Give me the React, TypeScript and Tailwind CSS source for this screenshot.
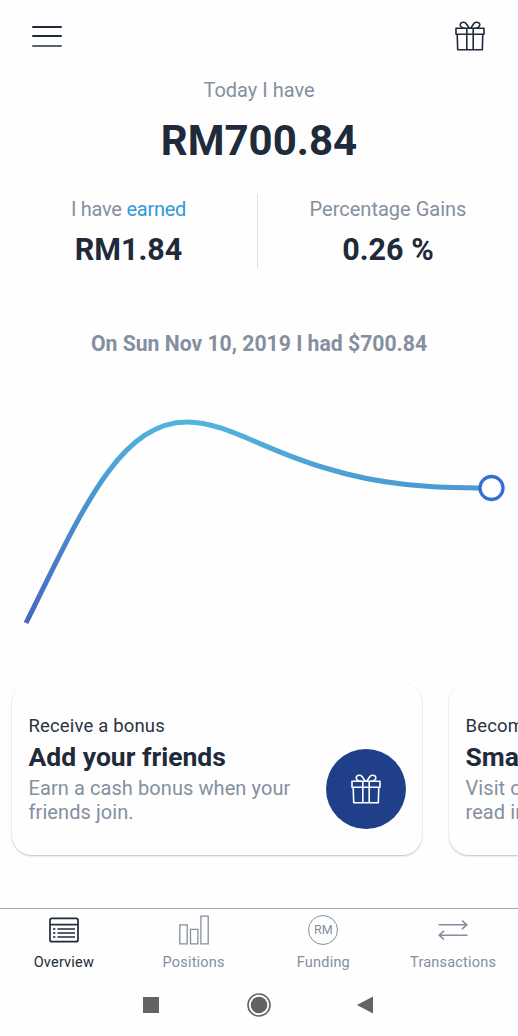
import type { ReactNode } from "react";

function GiftIcon({ className }: { className: string }) {
  return (
    <svg viewBox="0 0 30 30" className={className} fill="none" stroke="currentColor" strokeWidth="1.6" strokeLinejoin="round">
      <path d="M1 7.2h28v6H1z" />
      <path d="M2.2 13.2l.5 15.6h24.6l.5-15.6" />
      <path d="M11.8 7.2v21.6M18.2 7.2v21.6" />
      <path d="M10.600 7.200H8.200C5 5.600 4.400 3.300 6 2c2-1.500 4.300-.8 5.600 1.200l2.600 4" />
      <path d="M19.400 7.200h2.400C25 5.600 25.600 3.300 24 2c-2-1.500-4.300-.8-5.600 1.200l-2.600 4" />
    </svg>
  );
}

function OverviewIcon() {
  return (
    <svg viewBox="0 0 30 30" className="size-[30px]" fill="none" stroke="currentColor" strokeWidth="1.7">
      <rect x="1" y="3.300" width="28" height="23.400" rx="2" />
      <path d="M1 9.600h28" />
      <path d="M8.500 14h17.500M8.500 18h17.500M8.500 22h17.500" />
      <path d="M4 14h2.400M4 18h2.400M4 22h2.400" />
    </svg>
  );
}

function PositionsIcon() {
  return (
    <svg viewBox="0 0 30 30" className="size-[30px]" fill="none" stroke="currentColor" strokeWidth="1.300">
      <path d="M.8 9.800h7.400v19H.8zM11.500 14.300h7.400v14.500h-7.400zM21.900 1.200h7.300v27.600h-7.300z" />
    </svg>
  );
}

function FundingIcon() {
  return (
    <span className="flex size-[30px] items-center justify-center rounded-full border border-[#8190a0] text-[12.500px] leading-none">
      RM
    </span>
  );
}

function TransactionsIcon() {
  return (
    <svg viewBox="0 0 30 30" className="size-[30px]" fill="none" stroke="currentColor" strokeWidth="1.600">
      <path d="M.5 9.800h28M24 5.500l4.800 4.300-4.800 4.300" />
      <path d="M29.500 20.200h-28M6 15.900l-4.800 4.300L6 24.500" />
    </svg>
  );
}

function Stat({ label, value }: { label: ReactNode; value: string }) {
  return (
    <div className="flex flex-col items-center">
      <p className="mt-[3px] text-[20px] leading-6 text-[#8490a0]">{label}</p>
      <p className="mt-[9px] text-[30.500px] leading-10 font-bold text-[#1f2a3a]">{value}</p>
    </div>
  );
}

function BalanceChart() {
  return (
    <svg viewBox="0 0 518 280" className="h-[280px] w-full shrink-0" fill="none">
      <defs>
        <linearGradient id="balance" gradientUnits="userSpaceOnUse" x1="0" y1="244" x2="0" y2="40">
          <stop offset="0" stopColor="#4568c4" />
          <stop offset="0.35" stopColor="#4a80c9" />
          <stop offset="0.7" stopColor="#4b9dd3" />
          <stop offset="1" stopColor="#52b5dc" />
        </linearGradient>
      </defs>
      <path
        d="M26 243C79 137 118 42 187 42C226 42 265 71 327 88.500C380 105 430 108 490 108"
        stroke="url(#balance)"
        strokeWidth="5"
      />
      <circle cx="491.500" cy="108" r="11.500" fill="#fff" stroke="#3270d6" strokeWidth="3.300" />
    </svg>
  );
}

function PromoCard({ eyebrow, title, text, icon }: { eyebrow: string; title: string; text: ReactNode; icon?: ReactNode }) {
  return (
    <article className="flex h-[172px] w-[410px] shrink-0 rounded-[20px] bg-[#fefefe] pr-[16.500px] pl-[16.500px] shadow-[0_1px_2px_rgba(0,0,0,0.25)]">
      <div className="flex-1 pt-[31px] whitespace-nowrap">
        <p className="text-[18.500px] leading-6 tracking-[0.16px] text-[#2b333e]">{eyebrow}</p>
        <h2 className="mt-[2px] text-[26.500px] leading-[34px] font-bold text-[#1f2a3a]">{title}</h2>
        <p className="mt-[2px] text-[20px] leading-6 tracking-[0.08px] text-[#8490a0]">{text}</p>
      </div>
      {icon && (
        <div className="mt-[66px] flex size-[80px] items-center justify-center rounded-full bg-[#1f4088] text-white">{icon}</div>
      )}
    </article>
  );
}

function Tab({ icon, label, active = false }: { icon: ReactNode; label: string; active?: boolean }) {
  return (
    <div className={`flex flex-1 flex-col items-center ${active ? "text-[#1f2a3a]" : "text-[#8190a0]"}`}>
      {icon}
      <span className="mt-[8px] text-[14.500px] leading-5 tracking-[0.2px]">{label}</span>
    </div>
  );
}

export default function App() {
  return (
    <main className="flex h-[1036px] w-[518px] flex-col overflow-hidden bg-[#fefefe] font-[Roboto,sans-serif]">
      <header className="flex h-[72px] shrink-0 items-center justify-between pr-[33px] pl-8">
        <div className="flex w-[30px] flex-col gap-[7.500px]">
          <span className="h-[2px] rounded bg-[#1f2a3a]" />
          <span className="h-[2px] rounded bg-[#1f2a3a]" />
          <span className="h-[2px] rounded bg-[#5a6270]" />
        </div>
        <GiftIcon className="size-[30px] text-[#1f2a3a]" />
      </header>

      <section className="flex shrink-0 flex-col items-center">
        <p className="mt-1.5 text-[20px] leading-6 text-[#8490a0]">Today I have</p>
        <h1 className="mt-[13px] text-[42px] leading-[52px] font-bold text-[#1f2a3a]">RM700.84</h1>
      </section>

      <section className="mt-[27px] grid h-[74px] shrink-0 grid-cols-[257px_1px_260px]">
        <Stat
          label={<span className="tracking-[-0.25px]">I have <span className="text-[#3598d8]">earned</span></span>}
          value="RM1.84"
        />
        <div className="h-[74px] bg-[#dcdfe3]" />
        <Stat label="Percentage Gains" value="0.26 %" />
      </section>

      <p className="mt-[64px] shrink-0 text-center text-[21.200px] leading-6 font-bold text-[#8490a0]">
        On Sun Nov 10, 2019 I had $700.84
      </p>

      <div className="mt-[24px] h-[303px] shrink-0">
        <BalanceChart />
      </div>

      <section className="flex shrink-0 gap-[27px] pl-[12px]">
        <PromoCard
          eyebrow="Receive a bonus"
          title="Add your friends"
          text={<>Earn a cash bonus when your<br />friends join.</>}
          icon={<GiftIcon className="size-[30px]" />}
        />
        <PromoCard eyebrow="Become" title="Smart" text={<>Visit our<br />read in</>} />
      </section>

      <nav className="mt-[53px] -ml-px flex h-[74px] shrink-0 border-t border-[#a3a7ac] pt-1.5">
        <Tab icon={<OverviewIcon />} label="Overview" active />
        <Tab icon={<PositionsIcon />} label="Positions" />
        <Tab icon={<FundingIcon />} label="Funding" />
        <Tab icon={<TransactionsIcon />} label="Transactions" />
      </nav>

      <footer className="flex flex-1 items-start justify-center gap-[87.500px] pt-[10.500px] pr-[2px] text-[#636363]">
        <svg viewBox="0 0 16 24" className="h-6 w-4" fill="currentColor"><path d="M0 4h16v16H0z" /></svg>
        <svg viewBox="0 0 24 24" className="size-6" fill="currentColor">
          <circle cx="12" cy="12" r="11" fill="none" stroke="currentColor" strokeWidth="1.600" />
          <circle cx="12" cy="12" r="8.300" />
        </svg>
        <svg viewBox="0 0 16 24" className="-ml-px h-6 w-4" fill="currentColor"><path d="M0 12L16 3.500v17z" /></svg>
      </footer>
    </main>
  );
}
